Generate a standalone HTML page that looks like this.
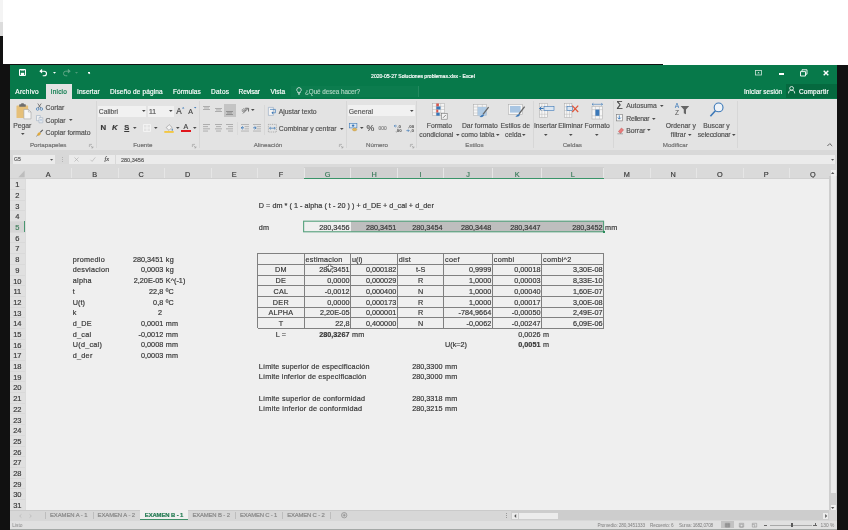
<!DOCTYPE html>
<html lang="es"><head><meta charset="utf-8"><title>Excel</title><style>
html,body{margin:0;padding:0;background:#111;}
body{width:848px;height:530px;overflow:hidden;position:relative;font-family:"Liberation Sans",sans-serif;}
#s{position:absolute;left:0;top:0;width:848px;height:530px;overflow:hidden;filter:blur(.5px);}
#s div,#s span,#s svg,#s i{position:absolute;display:block;}
#s span{line-height:12px;white-space:nowrap;-webkit-text-stroke:.18px;}
#s span.fit{text-align:justify;text-align-last:justify;white-space:nowrap;}
#s i.ar{width:0;height:0;border-left:1.5px solid transparent;border-right:1.5px solid transparent;border-left-style:solid;border-right-style:solid;border-left-color:transparent;border-right-color:transparent;}
#s svg{overflow:visible;}
#s span.c{transform:scaleY(1.08);transform-origin:50% 62%;}
</style></head><body><div id="s">
<div style="left:0px;top:0px;width:848px;height:530px;background:#fff;"></div>
<div style="left:0px;top:0px;width:3px;height:22px;background:#f4f4f4;"></div>
<div style="left:0px;top:21.8px;width:3px;height:14.6px;background:#dcdcdc;"></div>
<div style="left:0px;top:36.3px;width:3px;height:30px;background:#111;"></div>
<div style="left:0px;top:63.7px;width:848px;height:470px;background:#111;"></div>
<div style="left:561.5px;top:63.2px;width:102px;height:0.7px;background:#fff;"></div>
<div style="left:663px;top:63px;width:190px;height:2.4px;background:#fff;"></div>
<div style="left:10px;top:65.3px;width:827px;height:464.7px;background:#e3e3e3;"></div>
<div style="left:10px;top:65.3px;width:827px;height:33.3px;background:#07794a;"></div>
<div style="left:561.5px;top:64.9px;width:101.5px;height:1px;background:#07794a;"></div>
<svg style="left:19px;top:68.9px" width="7.6" height="7.2" viewBox="0 0 7.6 7.2"><path d="M0.5 0.5h6v6h-6z" fill="none" stroke="#fff" stroke-width="1"/><rect x="1.8" y="3.8" width="3.4" height="2.7" fill="#fff"/><rect x="1.5" y="0.5" width="4" height="1.6" fill="#fff" opacity=".6"/></svg>
<svg style="left:39.2px;top:68.2px" width="9" height="9" viewBox="0 0 9 9"><path d="M1 3.2h4.2a2.3 2.3 0 0 1 0 4.6h-1.5" fill="none" stroke="#fff" stroke-width="1.1"/><path d="M0.3 3.2l2.8-2.4v4.8z" fill="#fff"/></svg>
<svg style="left:52.70px;top:71.75px" width="3" height="1.7" viewBox="0 0 3 1.7"><path d="M0 0h3l-1.5 1.7z" fill="#fff"/></svg>
<svg style="left:61.6px;top:68.2px" width="9" height="9" viewBox="0 0 9 9"><path d="M8 3.2h-4.2a2.3 2.3 0 0 0 0 4.6h1.5" fill="none" stroke="#5fa585" stroke-width="1"/><path d="M8.7 3.2l-2.8-2.4v4.8z" fill="#5fa585"/></svg>
<svg style="left:74.80px;top:71.75px" width="3" height="1.7" viewBox="0 0 3 1.7"><path d="M0 0h3l-1.5 1.7z" fill="#4c9a77"/></svg>
<div style="left:88.3px;top:71.6px;width:2.2px;height:0.7px;background:#fff;"></div>
<svg style="left:88.20px;top:72.95px" width="2.4" height="1.3" viewBox="0 0 2.4 1.3"><path d="M0 0h2.4l-1.2 1.3z" fill="#fff"/></svg>
<span style="top:69.60px;font-size:5.1px;color:#fff;letter-spacing:-0.025px;left:371.1px;">2020-05-27 Soluciones problemas.xlsx - Excel</span>
<svg style="left:755px;top:69.8px" width="7" height="5.4" viewBox="0 0 7 5.4"><rect x="0.4" y="0.4" width="6.2" height="4.6" fill="none" stroke="#cfe5da" stroke-width=".8"/><path d="M2.3 3.3l1.2-1.4 1.2 1.4z" fill="#fff"/></svg>
<div style="left:778.6px;top:73.4px;width:5.2px;height:1.3px;background:#fff;"></div>
<svg style="left:799.8px;top:68.5px" width="8" height="8" viewBox="0 0 8 8"><path d="M0.5 2.6h5v4.4h-5z M2 2.4v-1.6h5v4.4h-1.4" fill="none" stroke="#fff" stroke-width=".9"/></svg>
<svg style="left:823.4px;top:69.9px" width="6" height="6" viewBox="0 0 6 6"><path d="M0.7 0.7l4.6 4.6M5.3 0.7l-4.6 4.6" stroke="#fff" stroke-width="1.4"/></svg>
<div style="left:46.2px;top:84px;width:26px;height:15px;background:#e3e3e3;"></div>
<span style="top:86.20px;font-size:6.5px;color:#fff;letter-spacing:0.271px;left:15.3px;">Archivo</span>
<span style="top:86.20px;font-size:6.5px;color:#07794a;letter-spacing:0.165px;left:50.8px;">Inicio</span>
<span style="top:86.20px;font-size:6.5px;color:#fff;letter-spacing:0.080px;left:77px;">Insertar</span>
<span style="top:86.20px;font-size:6.5px;color:#fff;letter-spacing:0.134px;left:110px;">Diseño de página</span>
<span style="top:86.20px;font-size:6.5px;color:#fff;letter-spacing:0.101px;left:173px;">Fórmulas</span>
<span style="top:86.20px;font-size:6.5px;color:#fff;letter-spacing:0.255px;left:211px;">Datos</span>
<span style="top:86.20px;font-size:6.5px;color:#fff;letter-spacing:-0.106px;left:238.6px;">Revisar</span>
<span style="top:86.20px;font-size:6.5px;color:#fff;letter-spacing:0.017px;left:270.6px;">Vista</span>
<svg style="left:295.6px;top:87.2px" width="6" height="8" viewBox="0 0 6 8"><path d="M3 0.6a2.2 2.2 0 0 1 1.3 4v1h-2.6v-1a2.2 2.2 0 0 1 1.3-4z" fill="none" stroke="#fff" stroke-width=".7"/><path d="M2 6.6h2M2.3 7.5h1.4" stroke="#fff" stroke-width=".6"/></svg>
<div style="left:291px;top:85.8px;width:127px;height:11.4px;background:rgba(255,255,255,.025);border-right:.5px solid rgba(255,255,255,.1)"></div>
<span style="top:86.20px;font-size:6.3px;color:#a9d3bf;letter-spacing:-0.043px;left:305px;">¿Qué desea hacer?</span>
<span style="top:86.20px;font-size:6.3px;color:#fff;letter-spacing:0.095px;left:744px;">Iniciar sesión</span>
<div style="left:785.8px;top:84.2px;width:51.2px;height:13.9px;background:#05693f;"></div>
<svg style="left:788.3px;top:86.4px" width="8" height="8" viewBox="0 0 8 8"><circle cx="3.6" cy="2.4" r="1.9" fill="none" stroke="#fff" stroke-width=".8"/><path d="M0.5 7.4c0-2.6 1.6-3.2 3.1-3.2s3.1.6 3.1 3.2" fill="none" stroke="#fff" stroke-width=".8"/></svg>
<span style="top:86.20px;font-size:6.5px;color:#fff;letter-spacing:0.133px;left:799px;">Compartir</span>
<svg style="left:16px;top:102.5px" width="16" height="17" viewBox="0 0 16 17"><rect x="0.5" y="2.5" width="11.6" height="12.6" rx=".6" fill="#e6c079"/><rect x="3.2" y="1.2" width="6.6" height="2.6" rx=".6" fill="#6e6e6e"/><rect x="5" y="0.2" width="3" height="2" rx=".8" fill="#6e6e6e"/><path d="M7.9 6.4h4.5l2.6 2.6v6.9h-7.1z" fill="#f6f6f6" stroke="#a2a2a2" stroke-width=".6"/><path d="M12.4 6.4v2.6h2.6" fill="none" stroke="#a2a2a2" stroke-width=".5"/></svg>
<span style="top:119.80px;font-size:6.8px;color:#525252;left:-77.7px;width:200px;text-align:center;">Pegar</span>
<svg style="left:20.50px;top:132.90px" width="3.6" height="2.0" viewBox="0 0 3.6 2.0"><path d="M0 0h3.6l-1.8 2.0z" fill="#4a4a4a"/></svg>
<svg style="left:35.8px;top:103.2px" width="7" height="8" viewBox="0 0 7 8"><path d="M1.8 0.5l3 4.6M5.2 0.5l-3 4.6" stroke="#555" stroke-width=".7"/><circle cx="1.6" cy="6" r="1.3" fill="none" stroke="#3b78b8" stroke-width=".7"/><circle cx="5.4" cy="6" r="1.3" fill="none" stroke="#3b78b8" stroke-width=".7"/></svg>
<span style="top:101.50px;font-size:6.8px;color:#525252;left:45.5px;">Cortar</span>
<svg style="left:36px;top:115.2px" width="7.4" height="8.4" viewBox="0 0 7.4 8.4"><path d="M0.5 0.5h3.8v5.2h-3.8z" fill="#f1f1f1" stroke="#9fb0c4" stroke-width=".6"/><path d="M3 2.6h3.8v5.2h-3.8z" fill="#f1f1f1" stroke="#9fb0c4" stroke-width=".6"/><path d="M3.8 4.4h2.2M3.8 5.8h2.2" stroke="#7fa3cc" stroke-width=".5"/></svg>
<span style="top:114.50px;font-size:6.8px;color:#525252;left:45.5px;">Copiar</span>
<svg style="left:68.50px;top:119.30px" width="3.6" height="2.0" viewBox="0 0 3.6 2.0"><path d="M0 0h3.6l-1.8 2.0z" fill="#4a4a4a"/></svg>
<svg style="left:35.8px;top:129.2px" width="8" height="8" viewBox="0 0 8 8"><path d="M4.2 3.4l2.6-2.6" stroke="#555" stroke-width="1.1"/><path d="M1 5.2l2.3-2.3 1.8 1.8-2.3 2.3z" fill="#e0a93c"/><path d="M0.5 7.5l1.2-1.6" stroke="#555" stroke-width=".6"/></svg>
<span style="top:127.30px;font-size:6.8px;color:#525252;left:45.5px;">Copiar formato</span>
<span style="top:139.00px;font-size:6.2px;color:#707070;left:-51.8px;width:200px;text-align:center;">Portapapeles</span>
<svg style="left:88.5px;top:144px" width="4.5" height="4.5" viewBox="0 0 4.5 4.5"><path d="M0.4 3V0.4H3" fill="none" stroke="#999" stroke-width=".6"/><path d="M1.6 1.6l2.2 2.2M3.9 2.3v1.6h-1.6" fill="none" stroke="#999" stroke-width=".6"/></svg>
<div style="left:95.5px;top:100.5px;width:0.7px;height:47.5px;background:#d7d7d7;"></div>
<div style="left:97.5px;top:105.8px;width:48.6px;height:10.8px;background:#f1f1f1;"></div>
<div style="left:147.6px;top:105.8px;width:26px;height:10.8px;background:#f1f1f1;"></div>
<span style="top:106.20px;font-size:6.8px;color:#5a5a5a;left:98.8px;">Calibri</span>
<svg style="left:141.60px;top:110.20px" width="3.6" height="2.0" viewBox="0 0 3.6 2.0"><path d="M0 0h3.6l-1.8 2.0z" fill="#4a4a4a"/></svg>
<span style="top:106.20px;font-size:6.8px;color:#5a5a5a;left:149px;">11</span>
<svg style="left:168.80px;top:110.20px" width="3.6" height="2.0" viewBox="0 0 3.6 2.0"><path d="M0 0h3.6l-1.8 2.0z" fill="#4a4a4a"/></svg>
<span style="top:105.60px;font-size:8.2px;color:#444;left:176.2px;">A</span>
<svg style="left:182.4px;top:106.6px" width="2.4" height="1.6" viewBox="0 0 2.4 1.6"><path d="M0 1.6l1.2-1.6 1.2 1.6z" fill="#3b78b8"/></svg>
<span style="top:106.00px;font-size:7px;color:#444;left:188.3px;">A</span>
<svg style="left:193.6px;top:106.8px" width="2.4" height="1.6" viewBox="0 0 2.4 1.6"><path d="M0 0l1.2 1.6 1.2-1.6z" fill="#3b78b8"/></svg>
<span style="top:122.20px;font-size:7.8px;color:#3a3a3a;font-weight:bold;left:100.4px;">N</span>
<span style="top:122.20px;font-size:7.8px;color:#3a3a3a;font-weight:bold;left:112px;font-style:italic;">K</span>
<span style="top:122.20px;font-size:7.6px;color:#3a3a3a;font-weight:bold;left:124.2px;text-decoration:underline;text-decoration-thickness:.6px;text-underline-offset:.6px;">S</span>
<svg style="left:133.40px;top:126.60px" width="3.6" height="2.0" viewBox="0 0 3.6 2.0"><path d="M0 0h3.6l-1.8 2.0z" fill="#4a4a4a"/></svg>
<svg style="left:143px;top:123.5px" width="8" height="8" viewBox="0 0 8 8"><path d="M0.5 0.5h7v7h-7zM4 0.5v7M0.5 4h7" fill="none" stroke="#f3f3f3" stroke-width="1"/></svg>
<svg style="left:154.40px;top:126.60px" width="3.6" height="2.0" viewBox="0 0 3.6 2.0"><path d="M0 0h3.6l-1.8 2.0z" fill="#4a4a4a"/></svg>
<svg style="left:163.5px;top:122.5px" width="10" height="10" viewBox="0 0 10 10"><path d="M2.2 4.6l3-3 2.8 2.8-3 3z" fill="#f3f3f3" stroke="#8a8a8a" stroke-width=".6"/><path d="M8.3 5.3c.5.8.8 1.2.8 1.6a.8.8 0 0 1-1.6 0c0-.4.3-.8.8-1.6z" fill="#6a8fb5"/><rect x="0.3" y="8" width="9.4" height="1.9" fill="#f2c744"/></svg>
<svg style="left:175.50px;top:126.60px" width="3.6" height="2.0" viewBox="0 0 3.6 2.0"><path d="M0 0h3.6l-1.8 2.0z" fill="#4a4a4a"/></svg>
<span style="top:120.60px;font-size:7px;color:#444;left:183.6px;">A</span>
<div style="left:181.2px;top:129.6px;width:9.6px;height:2.9px;background:#e0161c;"></div>
<svg style="left:192.80px;top:126.60px" width="3.6" height="2.0" viewBox="0 0 3.6 2.0"><path d="M0 0h3.6l-1.8 2.0z" fill="#4a4a4a"/></svg>
<span style="top:139.00px;font-size:6.2px;color:#707070;left:42.80000000000001px;width:200px;text-align:center;">Fuente</span>
<svg style="left:192.2px;top:144px" width="4.5" height="4.5" viewBox="0 0 4.5 4.5"><path d="M0.4 3V0.4H3" fill="none" stroke="#999" stroke-width=".6"/><path d="M1.6 1.6l2.2 2.2M3.9 2.3v1.6h-1.6" fill="none" stroke="#999" stroke-width=".6"/></svg>
<div style="left:198.6px;top:100.5px;width:0.7px;height:47.5px;background:#d7d7d7;"></div>
<svg style="left:202.8px;top:106.2px" width="7" height="5.5" viewBox="0 0 7 5.5"><rect x="0.0" y="0.0" width="7" height="0.9" fill="#a8a8a8"/><rect x="1.0" y="1.5" width="5" height="0.9" fill="#a8a8a8"/><rect x="0.0" y="3.0" width="7" height="0.9" fill="#a8a8a8"/></svg>
<svg style="left:214.7px;top:108.2px" width="7" height="5.5" viewBox="0 0 7 5.5"><rect x="0.0" y="0.0" width="7" height="0.9" fill="#a8a8a8"/><rect x="1.0" y="1.5" width="5" height="0.9" fill="#a8a8a8"/><rect x="0.0" y="3.0" width="7" height="0.9" fill="#a8a8a8"/></svg>
<div style="left:224.1px;top:104.4px;width:11.7px;height:12.2px;background:#c4c4c4;"></div>
<svg style="left:226.4px;top:110.6px" width="7" height="5.5" viewBox="0 0 7 5.5"><rect x="0.0" y="0.0" width="7" height="0.9" fill="#8c8c8c"/><rect x="1.0" y="1.5" width="5" height="0.9" fill="#8c8c8c"/><rect x="0.0" y="3.0" width="7" height="0.9" fill="#8c8c8c"/></svg>
<svg style="left:241.8px;top:107px" width="8" height="8" viewBox="0 0 8 8"><path d="M1 6.4l4.6-4.6" stroke="#5c5c5c" stroke-width=".9"/><path d="M3.4 1.2l3.2 0.1-0.1 3.2" fill="none" stroke="#5c5c5c" stroke-width=".9"/><text x="-.4" y="4.4" font-size="4.4" fill="#5c5c5c" font-family="Liberation Sans, sans-serif" transform="rotate(-20 2 4)">ab</text></svg>
<svg style="left:251.40px;top:109.40px" width="3.6" height="2.0" viewBox="0 0 3.6 2.0"><path d="M0 0h3.6l-1.8 2.0z" fill="#4a4a4a"/></svg>
<div style="left:264.3px;top:105px;width:0.6px;height:30px;background:#d8d8d8;"></div>
<svg style="left:268px;top:106.8px" width="9" height="9" viewBox="0 0 9 9"><path d="M0.4 0.4h5v8h-5z" fill="#f4f4f4" stroke="#8fa5bd" stroke-width=".6"/><path d="M2 2.4h5.4v3.4h-3" fill="none" stroke="#3b78b8" stroke-width=".7"/><path d="M5 4.4l-1.6 1.4 1.6 1.4z" fill="#3b78b8"/></svg>
<span style="top:106.40px;font-size:6.8px;color:#525252;left:278.8px;">Ajustar texto</span>
<svg style="left:203px;top:123.8px" width="7" height="9.8" viewBox="0 0 7 9.8"><rect x="0" y="0.0" width="7" height="0.9" fill="#a8a8a8"/><rect x="0" y="2.2" width="5" height="0.9" fill="#a8a8a8"/><rect x="0" y="4.4" width="7" height="0.9" fill="#a8a8a8"/><rect x="0" y="6.6000000000000005" width="5" height="0.9" fill="#a8a8a8"/></svg>
<svg style="left:214.7px;top:123.8px" width="7" height="9.8" viewBox="0 0 7 9.8"><rect x="0.0" y="0.0" width="7" height="0.9" fill="#a8a8a8"/><rect x="1.0" y="2.2" width="5" height="0.9" fill="#a8a8a8"/><rect x="0.0" y="4.4" width="7" height="0.9" fill="#a8a8a8"/><rect x="1.0" y="6.6000000000000005" width="5" height="0.9" fill="#a8a8a8"/></svg>
<svg style="left:226.4px;top:123.8px" width="7" height="9.8" viewBox="0 0 7 9.8"><rect x="0" y="0.0" width="7" height="0.9" fill="#a8a8a8"/><rect x="2" y="2.2" width="5" height="0.9" fill="#a8a8a8"/><rect x="0" y="4.4" width="7" height="0.9" fill="#a8a8a8"/><rect x="2" y="6.6000000000000005" width="5" height="0.9" fill="#a8a8a8"/></svg>
<div style="left:237.4px;top:121.5px;width:0.6px;height:13px;background:#dadada;"></div>
<svg style="left:241.2px;top:123.8px" width="8.4" height="8.6" viewBox="0 0 8.4 8.6"><rect x="0" y="0" width="8" height=".9" fill="#b0b0b0"/><rect x="3.6" y="2.2" width="4.4" height=".9" fill="#b0b0b0"/><rect x="3.6" y="4.4" width="4.4" height=".9" fill="#b0b0b0"/><rect x="0" y="6.6" width="8" height=".9" fill="#b0b0b0"/><path d="M3 3.8h-2.6M1.8 2.4l-1.6 1.4 1.6 1.4" fill="none" stroke="#3b78b8" stroke-width=".9"/></svg>
<svg style="left:252.8px;top:123.8px" width="8.4" height="8.6" viewBox="0 0 8.4 8.6"><rect x="0" y="0" width="8" height=".9" fill="#b0b0b0"/><rect x="3.6" y="2.2" width="4.4" height=".9" fill="#b0b0b0"/><rect x="3.6" y="4.4" width="4.4" height=".9" fill="#b0b0b0"/><rect x="0" y="6.6" width="8" height=".9" fill="#b0b0b0"/><path d="M.2 3.8h2.6M1.6 2.4l1.6 1.4-1.6 1.4" fill="none" stroke="#3b78b8" stroke-width=".9"/></svg>
<svg style="left:268px;top:124px" width="9" height="9" viewBox="0 0 9 9"><rect x="0.4" y="0.4" width="8" height="7.6" fill="none" stroke="#8a8a8a" stroke-width=".6" stroke-dasharray="1 .8"/><path d="M1.6 4.2h5.6M2.8 3l-1.3 1.2 1.3 1.2M6 3l1.3 1.2-1.3 1.2" fill="none" stroke="#3b78b8" stroke-width=".7"/></svg>
<span style="top:123.30px;font-size:6.8px;color:#525252;left:278.8px;">Combinar y centrar</span>
<svg style="left:339.50px;top:127.80px" width="3.6" height="2.0" viewBox="0 0 3.6 2.0"><path d="M0 0h3.6l-1.8 2.0z" fill="#4a4a4a"/></svg>
<span style="top:139.00px;font-size:6.2px;color:#707070;left:168px;width:200px;text-align:center;">Alineación</span>
<svg style="left:339.3px;top:144px" width="4.5" height="4.5" viewBox="0 0 4.5 4.5"><path d="M0.4 3V0.4H3" fill="none" stroke="#999" stroke-width=".6"/><path d="M1.6 1.6l2.2 2.2M3.9 2.3v1.6h-1.6" fill="none" stroke="#999" stroke-width=".6"/></svg>
<div style="left:345.6px;top:100.5px;width:0.7px;height:47.5px;background:#d7d7d7;"></div>
<div style="left:347.6px;top:105.2px;width:67.6px;height:10.8px;background:#f1f1f1;"></div>
<span style="top:106.20px;font-size:6.8px;color:#5a5a5a;left:348.8px;">General</span>
<svg style="left:410.40px;top:110.20px" width="3.6" height="2.0" viewBox="0 0 3.6 2.0"><path d="M0 0h3.6l-1.8 2.0z" fill="#4a4a4a"/></svg>
<svg style="left:348.8px;top:123.4px" width="9" height="9" viewBox="0 0 9 9"><rect x="0.3" y="0.3" width="7.6" height="4.6" fill="#dbe6f1" stroke="#3b78b8" stroke-width=".6"/><circle cx="4.1" cy="2.6" r="1.2" fill="#3b78b8"/><ellipse cx="5.6" cy="6.6" rx="2.2" ry="1.3" fill="#e3b75c" stroke="#b98d2f" stroke-width=".4"/></svg>
<svg style="left:360.00px;top:127.20px" width="3.6" height="2.0" viewBox="0 0 3.6 2.0"><path d="M0 0h3.6l-1.8 2.0z" fill="#4a4a4a"/></svg>
<span style="top:121.80px;font-size:8.8px;color:#505050;left:366.4px;">%</span>
<span style="top:122.60px;font-size:4.8px;color:#808080;left:378.6px;">000</span>
<svg style="left:393.6px;top:123.8px" width="9" height="9" viewBox="0 0 9 9"><text x="3.2" y="3.6" font-size="4.4" fill="#4a4a4a" font-weight="bold" font-family="Liberation Sans, sans-serif">,0</text><text x="1.6" y="8.2" font-size="4.4" fill="#4a4a4a" font-weight="bold" font-family="Liberation Sans, sans-serif">,00</text><path d="M2.8 2h-2.4M1.4 .8l-1.2 1.2 1.2 1.2" fill="none" stroke="#3b78b8" stroke-width=".7"/></svg>
<svg style="left:406.4px;top:123.8px" width="9" height="9" viewBox="0 0 9 9"><text x="2" y="3.6" font-size="4.4" fill="#4a4a4a" font-weight="bold" font-family="Liberation Sans, sans-serif">,00</text><text x="4.2" y="8.2" font-size="4.4" fill="#4a4a4a" font-weight="bold" font-family="Liberation Sans, sans-serif">,0</text><path d="M0.4 6.6h2.6M2 5.4l1.2 1.2-1.2 1.2" fill="none" stroke="#3b78b8" stroke-width=".7"/></svg>
<span style="top:139.00px;font-size:6.2px;color:#707070;left:277px;width:200px;text-align:center;">Número</span>
<svg style="left:410.2px;top:144px" width="4.5" height="4.5" viewBox="0 0 4.5 4.5"><path d="M0.4 3V0.4H3" fill="none" stroke="#999" stroke-width=".6"/><path d="M1.6 1.6l2.2 2.2M3.9 2.3v1.6h-1.6" fill="none" stroke="#999" stroke-width=".6"/></svg>
<div style="left:416.3px;top:100.5px;width:0.7px;height:47.5px;background:#d7d7d7;"></div>
<svg style="left:432px;top:102.5px" width="16" height="17" viewBox="0 0 16 17"><rect x=".3" y=".3" width="12.4" height="12.4" fill="#f6f6f6" stroke="#a5a5a5" stroke-width=".5"/><path d="M.3 3.25H12.7" stroke="#b9b9b9" stroke-width=".5"/><path d="M.3 6.50H12.7" stroke="#b9b9b9" stroke-width=".5"/><path d="M.3 9.75H12.7" stroke="#b9b9b9" stroke-width=".5"/><path d="M4.33 .3V12.7" stroke="#b9b9b9" stroke-width=".5"/><path d="M8.67 .3V12.7" stroke="#b9b9b9" stroke-width=".5"/><rect x="4.3" y=".5" width="2.6" height="3" fill="#d9534a"/><rect x="4.3" y="3.5" width="4.2" height="3" fill="#3b78b8"/><rect x="4.3" y="6.6" width="2" height="3" fill="#d9534a"/><rect x="4.3" y="9.7" width="3.4" height="3" fill="#3b78b8"/><rect x="9.6" y="10.6" width="5.6" height="5.6" fill="#f4f4f4" stroke="#777" stroke-width=".6"/><path d="M11 14.8l2.8-2.8" stroke="#555" stroke-width=".7"/></svg>
<span style="top:120.30px;font-size:6.8px;color:#525252;left:339.4px;width:200px;text-align:center;">Formato</span>
<span style="top:129.00px;font-size:6.8px;color:#525252;left:419.3px;">condicional</span>
<svg style="left:455.80px;top:134.00px" width="3.6" height="2.0" viewBox="0 0 3.6 2.0"><path d="M0 0h3.6l-1.8 2.0z" fill="#4a4a4a"/></svg>
<svg style="left:473px;top:103.5px" width="17" height="16" viewBox="0 0 17 16"><rect x=".3" y=".3" width="13.4" height="11.4" fill="#f6f6f6" stroke="#a5a5a5" stroke-width=".5"/><path d="M.3 3.00H13.7" stroke="#b9b9b9" stroke-width=".5"/><path d="M.3 6.00H13.7" stroke="#b9b9b9" stroke-width=".5"/><path d="M.3 9.00H13.7" stroke="#b9b9b9" stroke-width=".5"/><path d="M4.67 .3V11.7" stroke="#b9b9b9" stroke-width=".5"/><path d="M9.33 .3V11.7" stroke="#b9b9b9" stroke-width=".5"/><rect x="4.6" y="3" width="9" height="8.6" fill="#a9c6e3" opacity=".9"/><path d="M15.6 3.2l-5.6 7.2" stroke="#666" stroke-width="1.3"/><path d="M10 10.4c-1.6.4-2.2 1.8-3.6 2.4 1.8.8 4 .2 4.6-1.6z" fill="#3b78b8"/></svg>
<span style="top:120.30px;font-size:6.8px;color:#525252;left:379.9px;width:200px;text-align:center;">Dar formato</span>
<span style="top:129.00px;font-size:6.8px;color:#525252;left:461.2px;">como tabla</span>
<svg style="left:496.40px;top:134.00px" width="3.6" height="2.0" viewBox="0 0 3.6 2.0"><path d="M0 0h3.6l-1.8 2.0z" fill="#4a4a4a"/></svg>
<svg style="left:508px;top:103.5px" width="18" height="16" viewBox="0 0 18 16"><rect x=".3" y=".3" width="14" height="10" fill="#f6f6f6" stroke="#a5a5a5" stroke-width=".5"/><rect x="2" y="2" width="10.6" height="6.6" fill="#a9c6e3"/><path d="M16.6 2.6l-5.6 7.4" stroke="#666" stroke-width="1.3"/><path d="M11 10c-1.6.4-2.2 1.8-3.6 2.4 1.8.8 4 .2 4.6-1.6z" fill="#3b78b8"/></svg>
<span style="top:120.30px;font-size:6.8px;color:#525252;left:415.29999999999995px;width:200px;text-align:center;">Estilos de</span>
<span style="top:129.00px;font-size:6.8px;color:#525252;left:505px;">celda</span>
<svg style="left:522.40px;top:134.00px" width="3.6" height="2.0" viewBox="0 0 3.6 2.0"><path d="M0 0h3.6l-1.8 2.0z" fill="#4a4a4a"/></svg>
<span style="top:139.00px;font-size:6.2px;color:#707070;left:374.4px;width:200px;text-align:center;">Estilos</span>
<div style="left:532.6px;top:100.5px;width:0.7px;height:47.5px;background:#d7d7d7;"></div>
<svg style="left:538px;top:103px" width="17" height="16" viewBox="-1 0 17 16"><rect x=".3" y=".3" width="8.0" height="14.4" fill="#f6f6f6" stroke="#a5a5a5" stroke-width=".5"/><path d="M.3 3.75H8.299999999999999" stroke="#b9b9b9" stroke-width=".5"/><path d="M.3 7.50H8.299999999999999" stroke="#b9b9b9" stroke-width=".5"/><path d="M.3 11.25H8.299999999999999" stroke="#b9b9b9" stroke-width=".5"/><path d="M2.87 .3V14.7" stroke="#b9b9b9" stroke-width=".5"/><path d="M5.73 .3V14.7" stroke="#b9b9b9" stroke-width=".5"/><rect x="5" y="3.6" width="10" height="3.8" fill="#dbe6f1" stroke="#3b78b8" stroke-width=".6"/><path d="M4.6 5.5h-4M2.4 3.7l-1.9 1.8 1.9 1.8" fill="none" stroke="#3b78b8" stroke-width="1"/></svg>
<span style="top:120.30px;font-size:6.8px;color:#525252;left:445.5px;width:200px;text-align:center;">Insertar</span>
<svg style="left:544.00px;top:133.60px" width="3.6" height="2.0" viewBox="0 0 3.6 2.0"><path d="M0 0h3.6l-1.8 2.0z" fill="#4a4a4a"/></svg>
<svg style="left:564px;top:103px" width="17" height="16" viewBox="0 0 17 16"><rect x=".3" y=".3" width="7.6" height="14.4" fill="#f6f6f6" stroke="#a5a5a5" stroke-width=".5"/><path d="M.3 3.75H7.8999999999999995" stroke="#b9b9b9" stroke-width=".5"/><path d="M.3 7.50H7.8999999999999995" stroke="#b9b9b9" stroke-width=".5"/><path d="M.3 11.25H7.8999999999999995" stroke="#b9b9b9" stroke-width=".5"/><path d="M2.73 .3V14.7" stroke="#b9b9b9" stroke-width=".5"/><path d="M5.47 .3V14.7" stroke="#b9b9b9" stroke-width=".5"/><rect x="3" y="3.6" width="5.6" height="3.8" fill="#dbe6f1" stroke="#3b78b8" stroke-width=".6"/><path d="M8.2 2.6l6 6.4M14.2 2.6l-6 6.4" stroke="#e0563a" stroke-width="1.2"/></svg>
<span style="top:120.30px;font-size:6.8px;color:#525252;left:470.6px;width:200px;text-align:center;">Eliminar</span>
<svg style="left:569.00px;top:133.60px" width="3.6" height="2.0" viewBox="0 0 3.6 2.0"><path d="M0 0h3.6l-1.8 2.0z" fill="#4a4a4a"/></svg>
<svg style="left:590.5px;top:102.5px" width="13" height="17" viewBox="0 0 13 17"><rect x="1" y="3.4" width="10.6" height="12.6" fill="#f6f6f6" stroke="#a5a5a5" stroke-width=".5"/><path d="M1 6.6h10.6M1 12.8h10.6M4.4 3.4v12.6M8.4 3.4v12.6" stroke="#b9b9b9" stroke-width=".5"/><rect x="4.4" y="6.6" width="4" height="6.2" fill="#3b78b8"/><path d="M1 1.3h10.6M2.4 .2l-1.4 1.1 1.4 1.1M10.2 .2l1.4 1.1-1.4 1.1" fill="none" stroke="#3b78b8" stroke-width=".6"/></svg>
<span style="top:120.30px;font-size:6.8px;color:#525252;left:497.20000000000005px;width:200px;text-align:center;">Formato</span>
<svg style="left:595.20px;top:133.60px" width="3.6" height="2.0" viewBox="0 0 3.6 2.0"><path d="M0 0h3.6l-1.8 2.0z" fill="#4a4a4a"/></svg>
<span style="top:139.00px;font-size:6.2px;color:#707070;left:472.29999999999995px;width:200px;text-align:center;">Celdas</span>
<div style="left:613.2px;top:100.5px;width:0.7px;height:47.5px;background:#d7d7d7;"></div>
<span style="top:100.20px;font-size:10px;color:#444;left:616.6px;">Σ</span>
<span style="top:100.30px;font-size:6.8px;color:#525252;letter-spacing:-0.017px;left:626.3px;">Autosuma</span>
<svg style="left:660.00px;top:105.20px" width="3.6" height="2.0" viewBox="0 0 3.6 2.0"><path d="M0 0h3.6l-1.8 2.0z" fill="#4a4a4a"/></svg>
<svg style="left:616.3px;top:113.6px" width="7" height="8.2" viewBox="0 0 7 8.2"><rect x=".3" y=".3" width="6" height="6.6" fill="#f6f6f6" stroke="#777" stroke-width=".6"/><path d="M3.3 1.4v3.6M1.8 3.6l1.5 1.6 1.5-1.6" fill="none" stroke="#3b78b8" stroke-width=".9"/></svg>
<span style="top:112.80px;font-size:6.8px;color:#525252;letter-spacing:-0.304px;left:626.3px;">Rellenar</span>
<svg style="left:651.80px;top:117.70px" width="3.6" height="2.0" viewBox="0 0 3.6 2.0"><path d="M0 0h3.6l-1.8 2.0z" fill="#4a4a4a"/></svg>
<svg style="left:616.6px;top:126.8px" width="8" height="8" viewBox="0 0 8 8"><path d="M1.4 4.6l3-3.6 2.2 1.8-3 3.6z" fill="#e87c7c" stroke="#c04545" stroke-width=".4"/><path d="M.4 6.8h5.6" stroke="#777" stroke-width=".6"/></svg>
<span style="top:124.50px;font-size:6.8px;color:#525252;left:626.3px;">Borrar</span>
<svg style="left:646.80px;top:129.40px" width="3.6" height="2.0" viewBox="0 0 3.6 2.0"><path d="M0 0h3.6l-1.8 2.0z" fill="#4a4a4a"/></svg>
<svg style="left:673.5px;top:102.3px" width="16" height="15" viewBox="0 0 16 15"><text x="0.8" y="6" font-size="6.6" fill="#3b78b8" font-family="Liberation Sans, sans-serif">A</text><text x="1" y="13.4" font-size="6.6" fill="#555" font-family="Liberation Sans, sans-serif">Z</text><path d="M6.6 4h8.6l-3.2 3.6v4.6l-2.2-1v-3.6z" fill="#666"/></svg>
<span style="top:120.30px;font-size:6.8px;color:#525252;left:580.8px;width:200px;text-align:center;">Ordenar y</span>
<span style="top:129.00px;font-size:6.8px;color:#525252;left:670.8px;">filtrar</span>
<svg style="left:688.40px;top:134.00px" width="3.6" height="2.0" viewBox="0 0 3.6 2.0"><path d="M0 0h3.6l-1.8 2.0z" fill="#4a4a4a"/></svg>
<svg style="left:709px;top:102.3px" width="16" height="16" viewBox="0 0 16 16"><circle cx="9.6" cy="5.4" r="4.4" fill="#eef3f8" stroke="#3b78b8" stroke-width="1.1"/><path d="M6.4 8.8l-5 5.4" stroke="#3b78b8" stroke-width="1.6"/></svg>
<span style="top:120.30px;font-size:6.8px;color:#525252;left:616.5px;width:200px;text-align:center;">Buscar y</span>
<span style="top:129.00px;font-size:6.8px;color:#525252;letter-spacing:-0.160px;left:697.8px;">seleccionar</span>
<svg style="left:731.80px;top:134.00px" width="3.6" height="2.0" viewBox="0 0 3.6 2.0"><path d="M0 0h3.6l-1.8 2.0z" fill="#4a4a4a"/></svg>
<span style="top:139.00px;font-size:6.2px;color:#707070;left:575.3px;width:200px;text-align:center;">Modificar</span>
<div style="left:737.3px;top:100.5px;width:0.7px;height:47.5px;background:#d7d7d7;"></div>
<svg style="left:827.2px;top:142.6px" width="5.6" height="3.6" viewBox="0 0 5.6 3.6"><path d="M.4 3l2.4-2.4 2.4 2.4" fill="none" stroke="#555" stroke-width=".9"/></svg>
<div style="left:10px;top:149.6px;width:827px;height:18.2px;background:#d8d8d8;"></div>
<div style="left:12.5px;top:154.8px;width:42.2px;height:8.9px;background:#ebebeb;"></div>
<span style="top:153.40px;font-size:5px;color:#555;left:14px;">G5</span>
<svg style="left:49.60px;top:158.50px" width="3.2" height="1.8" viewBox="0 0 3.2 1.8"><path d="M0 0h3.2l-1.6 1.8z" fill="#555"/></svg>
<div style="left:61.6px;top:157px;width:0.7px;height:0.8px;background:#b4b4b4;"></div>
<div style="left:61.6px;top:158.8px;width:0.7px;height:0.8px;background:#b4b4b4;"></div>
<div style="left:61.6px;top:160.6px;width:0.7px;height:0.8px;background:#b4b4b4;"></div>
<div style="left:68.8px;top:154.8px;width:46.4px;height:8.9px;background:#ebebeb;"></div>
<svg style="left:74px;top:157px" width="5" height="5" viewBox="0 0 5 5"><path d="M.5 .5l4 4M4.5 .5l-4 4" stroke="#aaa" stroke-width=".6"/></svg>
<svg style="left:89.5px;top:157px" width="6" height="5" viewBox="0 0 6 5"><path d="M.5 2.8l1.6 1.6 3.2-4" fill="none" stroke="#aaa" stroke-width=".6"/></svg>
<span style="top:153.30px;font-size:6.4px;color:#505050;left:104.4px;font-style:italic;font-family:Liberation Serif,serif;">fx</span>
<div style="left:116.3px;top:154.8px;width:718.8px;height:8.9px;background:#ebebeb;"></div>
<span style="top:153.50px;font-size:5.5px;color:#5a5a5a;left:121px;">280,3456</span>
<svg style="left:830.60px;top:158.50px" width="3.2" height="1.8" viewBox="0 0 3.2 1.8"><path d="M0 0h3.2l-1.6 1.8z" fill="#555"/></svg>
<div style="left:10px;top:164.2px;width:818.6px;height:14px;background:#dadada;"></div>
<div style="left:10px;top:178.2px;width:15px;height:332px;background:#e0e0e0;"></div>
<div style="left:25px;top:178.2px;width:803.6px;height:332px;background:#efefef;"></div>
<div style="left:304.25px;top:167.4px;width:299.5px;height:10.6px;background:#d0d0d0;"></div>
<div style="left:10px;top:221.35999999999999px;width:15px;height:10.69px;background:#d5d5d5;"></div>
<svg style="left:17.5px;top:170px" width="7" height="7.6" viewBox="0 0 7 7.6"><path d="M6.6 .6v6.6h-6.2z" fill="#bdbdbd"/></svg>
<span style="top:169.00px;font-size:7.3px;color:#3a3a3a;left:-51.75px;width:200px;text-align:center;">A</span>
<div style="left:71.2px;top:167.6px;width:0.7px;height:10.4px;background:#e6e6e6;"></div>
<span style="top:169.00px;font-size:7.3px;color:#3a3a3a;left:-5.25px;width:200px;text-align:center;">B</span>
<div style="left:117.7px;top:167.6px;width:0.7px;height:10.4px;background:#e6e6e6;"></div>
<span style="top:169.00px;font-size:7.3px;color:#3a3a3a;left:41.25px;width:200px;text-align:center;">C</span>
<div style="left:164.2px;top:167.6px;width:0.7px;height:10.4px;background:#e6e6e6;"></div>
<span style="top:169.00px;font-size:7.3px;color:#3a3a3a;left:87.75px;width:200px;text-align:center;">D</span>
<div style="left:210.7px;top:167.6px;width:0.7px;height:10.4px;background:#e6e6e6;"></div>
<span style="top:169.00px;font-size:7.3px;color:#3a3a3a;left:134.25px;width:200px;text-align:center;">E</span>
<div style="left:257.2px;top:167.6px;width:0.7px;height:10.4px;background:#e6e6e6;"></div>
<span style="top:169.00px;font-size:7.3px;color:#3a3a3a;left:180.875px;width:200px;text-align:center;">F</span>
<div style="left:303.95px;top:167.6px;width:0.7px;height:10.4px;background:#e6e6e6;"></div>
<span style="top:169.00px;font-size:7.3px;color:#3a7a5a;left:227.5px;width:200px;text-align:center;">G</span>
<div style="left:350.45px;top:167.6px;width:0.7px;height:10.4px;background:#e6e6e6;"></div>
<span style="top:169.00px;font-size:7.3px;color:#3a7a5a;left:274.125px;width:200px;text-align:center;">H</span>
<div style="left:397.2px;top:167.6px;width:0.7px;height:10.4px;background:#e6e6e6;"></div>
<span style="top:169.00px;font-size:7.3px;color:#3a7a5a;left:320.625px;width:200px;text-align:center;">I</span>
<div style="left:443.45px;top:167.6px;width:0.7px;height:10.4px;background:#e6e6e6;"></div>
<span style="top:169.00px;font-size:7.3px;color:#3a7a5a;left:368.125px;width:200px;text-align:center;">J</span>
<div style="left:492.2px;top:167.6px;width:0.7px;height:10.4px;background:#e6e6e6;"></div>
<span style="top:169.00px;font-size:7.3px;color:#3a7a5a;left:417.125px;width:200px;text-align:center;">K</span>
<div style="left:541.45px;top:167.6px;width:0.7px;height:10.4px;background:#e6e6e6;"></div>
<span style="top:169.00px;font-size:7.3px;color:#3a7a5a;left:472.75px;width:200px;text-align:center;">L</span>
<div style="left:603.45px;top:167.6px;width:0.7px;height:10.4px;background:#e6e6e6;"></div>
<span style="top:169.00px;font-size:7.3px;color:#3a3a3a;left:526.875px;width:200px;text-align:center;">M</span>
<div style="left:649.7px;top:167.6px;width:0.7px;height:10.4px;background:#e6e6e6;"></div>
<span style="top:169.00px;font-size:7.3px;color:#3a3a3a;left:573.25px;width:200px;text-align:center;">N</span>
<div style="left:696.2px;top:167.6px;width:0.7px;height:10.4px;background:#e6e6e6;"></div>
<span style="top:169.00px;font-size:7.3px;color:#3a3a3a;left:619.75px;width:200px;text-align:center;">O</span>
<div style="left:742.7px;top:167.6px;width:0.7px;height:10.4px;background:#e6e6e6;"></div>
<span style="top:169.00px;font-size:7.3px;color:#3a3a3a;left:666.25px;width:200px;text-align:center;">P</span>
<div style="left:789.2px;top:167.6px;width:0.7px;height:10.4px;background:#e6e6e6;"></div>
<span style="top:169.00px;font-size:7.3px;color:#3a3a3a;left:712.75px;width:200px;text-align:center;">Q</span>
<div style="left:835.7px;top:167.6px;width:0.7px;height:10.4px;background:#e6e6e6;"></div>
<span style="top:179.34px;font-size:7.5px;color:#3a3a3a;left:-82.7px;width:200px;text-align:center;">1</span>
<div style="left:10px;top:188.98999999999998px;width:15px;height:0.6px;background:#d9d9d9;"></div>
<span style="top:190.03px;font-size:7.5px;color:#3a3a3a;left:-82.7px;width:200px;text-align:center;">2</span>
<div style="left:10px;top:199.67999999999998px;width:15px;height:0.6px;background:#d9d9d9;"></div>
<span style="top:200.72px;font-size:7.5px;color:#3a3a3a;left:-82.7px;width:200px;text-align:center;">3</span>
<div style="left:10px;top:210.36999999999998px;width:15px;height:0.6px;background:#d9d9d9;"></div>
<span style="top:211.41px;font-size:7.5px;color:#3a3a3a;left:-82.7px;width:200px;text-align:center;">4</span>
<div style="left:10px;top:221.05999999999997px;width:15px;height:0.6px;background:#d9d9d9;"></div>
<span style="top:222.10px;font-size:7.5px;color:#43805f;left:-82.7px;width:200px;text-align:center;">5</span>
<div style="left:10px;top:231.74999999999997px;width:15px;height:0.6px;background:#d9d9d9;"></div>
<span style="top:232.79px;font-size:7.5px;color:#3a3a3a;left:-82.7px;width:200px;text-align:center;">6</span>
<div style="left:10px;top:242.43999999999997px;width:15px;height:0.6px;background:#d9d9d9;"></div>
<span style="top:243.49px;font-size:7.5px;color:#3a3a3a;left:-82.7px;width:200px;text-align:center;">7</span>
<div style="left:10px;top:253.13px;width:15px;height:0.6px;background:#d9d9d9;"></div>
<span style="top:254.18px;font-size:7.5px;color:#3a3a3a;left:-82.7px;width:200px;text-align:center;">8</span>
<div style="left:10px;top:263.82px;width:15px;height:0.6px;background:#d9d9d9;"></div>
<span style="top:264.87px;font-size:7.5px;color:#3a3a3a;left:-82.7px;width:200px;text-align:center;">9</span>
<div style="left:10px;top:274.51px;width:15px;height:0.6px;background:#d9d9d9;"></div>
<span style="top:275.56px;font-size:7.5px;color:#3a3a3a;left:-82.7px;width:200px;text-align:center;">10</span>
<div style="left:10px;top:285.2px;width:15px;height:0.6px;background:#d9d9d9;"></div>
<span style="top:286.25px;font-size:7.5px;color:#3a3a3a;left:-82.7px;width:200px;text-align:center;">11</span>
<div style="left:10px;top:295.89px;width:15px;height:0.6px;background:#d9d9d9;"></div>
<span style="top:296.94px;font-size:7.5px;color:#3a3a3a;left:-82.7px;width:200px;text-align:center;">12</span>
<div style="left:10px;top:306.58px;width:15px;height:0.6px;background:#d9d9d9;"></div>
<span style="top:307.62px;font-size:7.5px;color:#3a3a3a;left:-82.7px;width:200px;text-align:center;">13</span>
<div style="left:10px;top:317.27px;width:15px;height:0.6px;background:#d9d9d9;"></div>
<span style="top:318.31px;font-size:7.5px;color:#3a3a3a;left:-82.7px;width:200px;text-align:center;">14</span>
<div style="left:10px;top:327.96px;width:15px;height:0.6px;background:#d9d9d9;"></div>
<span style="top:329.00px;font-size:7.5px;color:#3a3a3a;left:-82.7px;width:200px;text-align:center;">15</span>
<div style="left:10px;top:338.65px;width:15px;height:0.6px;background:#d9d9d9;"></div>
<span style="top:339.69px;font-size:7.5px;color:#3a3a3a;left:-82.7px;width:200px;text-align:center;">16</span>
<div style="left:10px;top:349.34px;width:15px;height:0.6px;background:#d9d9d9;"></div>
<span style="top:350.38px;font-size:7.5px;color:#3a3a3a;left:-82.7px;width:200px;text-align:center;">17</span>
<div style="left:10px;top:360.03px;width:15px;height:0.6px;background:#d9d9d9;"></div>
<span style="top:361.07px;font-size:7.5px;color:#3a3a3a;left:-82.7px;width:200px;text-align:center;">18</span>
<div style="left:10px;top:370.71999999999997px;width:15px;height:0.6px;background:#d9d9d9;"></div>
<span style="top:371.76px;font-size:7.5px;color:#3a3a3a;left:-82.7px;width:200px;text-align:center;">19</span>
<div style="left:10px;top:381.40999999999997px;width:15px;height:0.6px;background:#d9d9d9;"></div>
<span style="top:382.45px;font-size:7.5px;color:#3a3a3a;left:-82.7px;width:200px;text-align:center;">20</span>
<div style="left:10px;top:392.09999999999997px;width:15px;height:0.6px;background:#d9d9d9;"></div>
<span style="top:393.14px;font-size:7.5px;color:#3a3a3a;left:-82.7px;width:200px;text-align:center;">21</span>
<div style="left:10px;top:402.78999999999996px;width:15px;height:0.6px;background:#d9d9d9;"></div>
<span style="top:403.83px;font-size:7.5px;color:#3a3a3a;left:-82.7px;width:200px;text-align:center;">22</span>
<div style="left:10px;top:413.47999999999996px;width:15px;height:0.6px;background:#d9d9d9;"></div>
<span style="top:414.52px;font-size:7.5px;color:#3a3a3a;left:-82.7px;width:200px;text-align:center;">23</span>
<div style="left:10px;top:424.16999999999996px;width:15px;height:0.6px;background:#d9d9d9;"></div>
<span style="top:425.21px;font-size:7.5px;color:#3a3a3a;left:-82.7px;width:200px;text-align:center;">24</span>
<div style="left:10px;top:434.85999999999996px;width:15px;height:0.6px;background:#d9d9d9;"></div>
<span style="top:435.90px;font-size:7.5px;color:#3a3a3a;left:-82.7px;width:200px;text-align:center;">25</span>
<div style="left:10px;top:445.54999999999995px;width:15px;height:0.6px;background:#d9d9d9;"></div>
<span style="top:446.60px;font-size:7.5px;color:#3a3a3a;left:-82.7px;width:200px;text-align:center;">26</span>
<div style="left:10px;top:456.24px;width:15px;height:0.6px;background:#d9d9d9;"></div>
<span style="top:457.28px;font-size:7.5px;color:#3a3a3a;left:-82.7px;width:200px;text-align:center;">27</span>
<div style="left:10px;top:466.92999999999995px;width:15px;height:0.6px;background:#d9d9d9;"></div>
<span style="top:467.98px;font-size:7.5px;color:#3a3a3a;left:-82.7px;width:200px;text-align:center;">28</span>
<div style="left:10px;top:477.62px;width:15px;height:0.6px;background:#d9d9d9;"></div>
<span style="top:478.66px;font-size:7.5px;color:#3a3a3a;left:-82.7px;width:200px;text-align:center;">29</span>
<div style="left:10px;top:488.30999999999995px;width:15px;height:0.6px;background:#d9d9d9;"></div>
<span style="top:489.36px;font-size:7.5px;color:#3a3a3a;left:-82.7px;width:200px;text-align:center;">30</span>
<div style="left:10px;top:499.0px;width:15px;height:0.6px;background:#d9d9d9;"></div>
<span style="top:500.04px;font-size:7.5px;color:#3a3a3a;left:-82.7px;width:200px;text-align:center;">31</span>
<div style="left:10px;top:509.68999999999994px;width:15px;height:0.6px;background:#d9d9d9;"></div>
<div style="left:24.7px;top:178.2px;width:0.4px;height:332px;background:#dcdcdc;"></div>
<div style="left:10px;top:177.9px;width:818.6px;height:0.5px;background:#d0d0d0;"></div>
<div style="left:304.25px;top:177.6px;width:299.5px;height:1.1px;background:#3a9469;"></div>
<div style="left:24px;top:221.35999999999999px;width:1.1px;height:10.69px;background:#4a9670;"></div>
<span class="c" style="top:253.78px;font-size:7.25px;color:#363636;left:72.8px;letter-spacing:.24px;">promedio</span>
<span class="c" style="top:264.47px;font-size:7.25px;color:#363636;left:72.8px;letter-spacing:.24px;">desviacion</span>
<span class="c" style="top:275.16px;font-size:7.25px;color:#363636;left:72.8px;letter-spacing:.24px;">alpha</span>
<span class="c" style="top:285.85px;font-size:7.25px;color:#363636;left:72.8px;">t</span>
<span class="c" style="top:296.54px;font-size:7.25px;color:#363636;left:72.8px;">U(t)</span>
<span class="c" style="top:307.23px;font-size:7.25px;color:#363636;left:72.8px;">k</span>
<span class="c" style="top:317.92px;font-size:7.25px;color:#363636;left:72.8px;letter-spacing:.24px;">d_DE</span>
<span class="c" style="top:328.61px;font-size:7.25px;color:#363636;left:72.8px;letter-spacing:.24px;">d_cal</span>
<span class="c" style="top:339.30px;font-size:7.25px;color:#363636;left:72.8px;letter-spacing:.24px;">U(d_cal)</span>
<span class="c" style="top:349.99px;font-size:7.25px;color:#363636;left:72.8px;letter-spacing:.24px;">d_der</span>
<span class="c" style="top:253.78px;font-size:7.25px;color:#363636;right:684.80px;">280,3451</span>
<span class="c" style="top:264.47px;font-size:7.25px;color:#363636;right:684.80px;">0,0003</span>
<span class="c" style="top:275.16px;font-size:7.25px;color:#363636;right:684.80px;">2,20E-05</span>
<span class="c" style="top:285.85px;font-size:7.25px;color:#363636;right:684.80px;">22,8</span>
<span class="c" style="top:296.54px;font-size:7.25px;color:#363636;right:684.80px;">0,8</span>
<span class="c" style="top:307.23px;font-size:7.25px;color:#363636;right:685.90px;">2</span>
<span class="c" style="top:317.92px;font-size:7.25px;color:#363636;right:684.80px;">0,0001</span>
<span class="c" style="top:328.61px;font-size:7.25px;color:#363636;right:684.80px;">-0,0012</span>
<span class="c" style="top:339.30px;font-size:7.25px;color:#363636;right:684.80px;">0,0008</span>
<span class="c" style="top:349.99px;font-size:7.25px;color:#363636;right:684.80px;">0,0003</span>
<span class="c" style="top:253.78px;font-size:7.25px;color:#363636;left:165.8px;letter-spacing:.24px;">kg</span>
<span class="c" style="top:264.47px;font-size:7.25px;color:#363636;left:165.8px;letter-spacing:.24px;">kg</span>
<span class="c" style="top:275.16px;font-size:7.25px;color:#363636;left:165.8px;">K^(-1)</span>
<span class="c" style="top:285.85px;font-size:7.25px;color:#363636;left:165.8px;">ºC</span>
<span class="c" style="top:296.54px;font-size:7.25px;color:#363636;left:165.8px;">ºC</span>
<span class="c" style="top:317.92px;font-size:7.25px;color:#363636;left:165.8px;letter-spacing:.24px;">mm</span>
<span class="c" style="top:328.61px;font-size:7.25px;color:#363636;left:165.8px;letter-spacing:.24px;">mm</span>
<span class="c" style="top:339.30px;font-size:7.25px;color:#363636;left:165.8px;letter-spacing:.24px;">mm</span>
<span class="c" style="top:349.99px;font-size:7.25px;color:#363636;left:165.8px;letter-spacing:.24px;">mm</span>
<span style="top:200.32px;font-size:7.25px;color:#363636;letter-spacing:0.024px;left:258.8px;transform:scaleY(1.08);transform-origin:50% 62%;">D = dm * ( 1 - alpha ( t - 20 ) ) + d_DE + d_cal + d_der</span>
<span class="c" style="top:221.70px;font-size:7.25px;color:#363636;left:258.8px;letter-spacing:.24px;">dm</span>
<div style="left:350.75px;top:221.35999999999999px;width:253.0px;height:10.69px;background:#bebebe;"></div>
<span class="c" style="top:221.70px;font-size:7.25px;color:#363636;right:498.55px;">280,3456</span>
<span class="c" style="top:221.70px;font-size:7.25px;color:#363636;right:451.80px;">280,3451</span>
<span class="c" style="top:221.70px;font-size:7.25px;color:#363636;right:405.55px;">280,3454</span>
<span class="c" style="top:221.70px;font-size:7.25px;color:#363636;right:356.80px;">280,3448</span>
<span class="c" style="top:221.70px;font-size:7.25px;color:#363636;right:307.55px;">280,3447</span>
<span class="c" style="top:221.70px;font-size:7.25px;color:#363636;right:245.55px;">280,3452</span>
<span class="c" style="top:221.70px;font-size:7.25px;color:#363636;left:605.05px;letter-spacing:.24px;">mm</span>
<svg style="left:303.25px;top:220.35999999999999px" width="301.5" height="12.69" viewBox="0 0 301.5 12.69"><rect x=".6" y="1.2" width="300.0" height="10.59" fill="none" stroke="#55a07c" stroke-width="1.1"/></svg>
<div style="left:602.65px;top:231.14999999999998px;width:1.9px;height:1.9px;background:#2a8a5a;"></div>
<div style="left:257.5px;top:253.13px;width:346.25px;height:0.62px;background:#808080;"></div>
<div style="left:257.5px;top:263.82px;width:346.25px;height:0.62px;background:#808080;"></div>
<div style="left:257.5px;top:274.51px;width:346.25px;height:0.62px;background:#808080;"></div>
<div style="left:257.5px;top:285.2px;width:346.25px;height:0.62px;background:#808080;"></div>
<div style="left:257.5px;top:295.89px;width:346.25px;height:0.62px;background:#808080;"></div>
<div style="left:257.5px;top:306.58px;width:346.25px;height:0.62px;background:#808080;"></div>
<div style="left:257.5px;top:317.27px;width:346.25px;height:0.62px;background:#808080;"></div>
<div style="left:257.5px;top:327.96px;width:346.25px;height:0.62px;background:#808080;"></div>
<div style="left:257.2px;top:253.43px;width:0.62px;height:74.83px;background:#808080;"></div>
<div style="left:303.95px;top:253.43px;width:0.62px;height:74.83px;background:#808080;"></div>
<div style="left:350.45px;top:253.43px;width:0.62px;height:74.83px;background:#808080;"></div>
<div style="left:397.2px;top:253.43px;width:0.62px;height:74.83px;background:#808080;"></div>
<div style="left:443.45px;top:253.43px;width:0.62px;height:74.83px;background:#808080;"></div>
<div style="left:492.2px;top:253.43px;width:0.62px;height:74.83px;background:#808080;"></div>
<div style="left:541.45px;top:253.43px;width:0.62px;height:74.83px;background:#808080;"></div>
<div style="left:603.45px;top:253.43px;width:0.62px;height:74.83px;background:#808080;"></div>
<span class="c" style="top:253.78px;font-size:7.25px;color:#363636;left:305.55px;letter-spacing:.24px;">estimacion</span>
<span class="c" style="top:253.78px;font-size:7.25px;color:#363636;left:352.05px;">u(i)</span>
<span class="c" style="top:253.78px;font-size:7.25px;color:#363636;left:398.8px;letter-spacing:.24px;">dist</span>
<span class="c" style="top:253.78px;font-size:7.25px;color:#363636;left:445.05px;letter-spacing:.24px;">coef</span>
<span class="c" style="top:253.78px;font-size:7.25px;color:#363636;left:493.8px;letter-spacing:.24px;">combi</span>
<span class="c" style="top:253.78px;font-size:7.25px;color:#363636;left:543.05px;letter-spacing:.24px;">combi^2</span>
<span class="c" style="top:264.47px;font-size:7.25px;color:#363636;left:180.875px;width:200px;text-align:center;letter-spacing:.24px;">DM</span>
<span class="c" style="top:264.47px;font-size:7.25px;color:#363636;right:498.55px;">280,3451</span>
<span class="c" style="top:264.47px;font-size:7.25px;color:#363636;right:451.80px;">0,000182</span>
<span class="c" style="top:264.47px;font-size:7.25px;color:#363636;left:320.625px;width:200px;text-align:center;">t-S</span>
<span class="c" style="top:264.47px;font-size:7.25px;color:#363636;right:356.80px;">0,9999</span>
<span class="c" style="top:264.47px;font-size:7.25px;color:#363636;right:307.55px;">0,00018</span>
<span class="c" style="top:264.47px;font-size:7.25px;color:#363636;right:245.55px;">3,30E-08</span>
<span class="c" style="top:275.16px;font-size:7.25px;color:#363636;left:180.875px;width:200px;text-align:center;letter-spacing:.24px;">DE</span>
<span class="c" style="top:275.16px;font-size:7.25px;color:#363636;right:498.55px;">0,0000</span>
<span class="c" style="top:275.16px;font-size:7.25px;color:#363636;right:451.80px;">0,000029</span>
<span class="c" style="top:275.16px;font-size:7.25px;color:#363636;left:320.625px;width:200px;text-align:center;">R</span>
<span class="c" style="top:275.16px;font-size:7.25px;color:#363636;right:356.80px;">1,0000</span>
<span class="c" style="top:275.16px;font-size:7.25px;color:#363636;right:307.55px;">0,00003</span>
<span class="c" style="top:275.16px;font-size:7.25px;color:#363636;right:245.55px;">8,33E-10</span>
<span class="c" style="top:285.85px;font-size:7.25px;color:#363636;left:180.875px;width:200px;text-align:center;letter-spacing:.24px;">CAL</span>
<span class="c" style="top:285.85px;font-size:7.25px;color:#363636;right:498.55px;">-0,0012</span>
<span class="c" style="top:285.85px;font-size:7.25px;color:#363636;right:451.80px;">0,000400</span>
<span class="c" style="top:285.85px;font-size:7.25px;color:#363636;left:320.625px;width:200px;text-align:center;">N</span>
<span class="c" style="top:285.85px;font-size:7.25px;color:#363636;right:356.80px;">1,0000</span>
<span class="c" style="top:285.85px;font-size:7.25px;color:#363636;right:307.55px;">0,00040</span>
<span class="c" style="top:285.85px;font-size:7.25px;color:#363636;right:245.55px;">1,60E-07</span>
<span class="c" style="top:296.54px;font-size:7.25px;color:#363636;left:180.875px;width:200px;text-align:center;letter-spacing:.24px;">DER</span>
<span class="c" style="top:296.54px;font-size:7.25px;color:#363636;right:498.55px;">0,0000</span>
<span class="c" style="top:296.54px;font-size:7.25px;color:#363636;right:451.80px;">0,000173</span>
<span class="c" style="top:296.54px;font-size:7.25px;color:#363636;left:320.625px;width:200px;text-align:center;">R</span>
<span class="c" style="top:296.54px;font-size:7.25px;color:#363636;right:356.80px;">1,0000</span>
<span class="c" style="top:296.54px;font-size:7.25px;color:#363636;right:307.55px;">0,00017</span>
<span class="c" style="top:296.54px;font-size:7.25px;color:#363636;right:245.55px;">3,00E-08</span>
<span class="c" style="top:307.23px;font-size:7.25px;color:#363636;left:180.875px;width:200px;text-align:center;letter-spacing:.24px;">ALPHA</span>
<span class="c" style="top:307.23px;font-size:7.25px;color:#363636;right:498.55px;">2,20E-05</span>
<span class="c" style="top:307.23px;font-size:7.25px;color:#363636;right:451.80px;">0,000001</span>
<span class="c" style="top:307.23px;font-size:7.25px;color:#363636;left:320.625px;width:200px;text-align:center;">R</span>
<span class="c" style="top:307.23px;font-size:7.25px;color:#363636;right:356.80px;">-784,9664</span>
<span class="c" style="top:307.23px;font-size:7.25px;color:#363636;right:307.55px;">-0,00050</span>
<span class="c" style="top:307.23px;font-size:7.25px;color:#363636;right:245.55px;">2,49E-07</span>
<span class="c" style="top:317.92px;font-size:7.25px;color:#363636;left:180.875px;width:200px;text-align:center;">T</span>
<span class="c" style="top:317.92px;font-size:7.25px;color:#363636;right:498.55px;">22,8</span>
<span class="c" style="top:317.92px;font-size:7.25px;color:#363636;right:451.80px;">0,400000</span>
<span class="c" style="top:317.92px;font-size:7.25px;color:#363636;left:320.625px;width:200px;text-align:center;">N</span>
<span class="c" style="top:317.92px;font-size:7.25px;color:#363636;right:356.80px;">-0,0062</span>
<span class="c" style="top:317.92px;font-size:7.25px;color:#363636;right:307.55px;">-0,00247</span>
<span class="c" style="top:317.92px;font-size:7.25px;color:#363636;right:245.55px;">6,09E-06</span>
<span class="c" style="top:328.61px;font-size:7.25px;color:#363636;left:180.875px;width:200px;text-align:center;">L =</span>
<span class="c" style="top:328.61px;font-size:7.25px;color:#363636;font-weight:bold;right:498.55px;">280,3267</span>
<span class="c" style="top:328.61px;font-size:7.25px;color:#363636;left:352.05px;letter-spacing:.24px;">mm</span>
<span class="c" style="top:328.61px;font-size:7.25px;color:#363636;right:307.55px;">0,0026</span>
<span class="c" style="top:328.61px;font-size:7.25px;color:#363636;left:543.05px;">m</span>
<span class="c" style="top:339.30px;font-size:7.25px;color:#363636;left:445.05px;">U(k=2)</span>
<span class="c" style="top:339.30px;font-size:7.25px;color:#363636;font-weight:bold;right:307.55px;">0,0051</span>
<span class="c" style="top:339.30px;font-size:7.25px;color:#363636;left:543.05px;">m</span>
<span style="top:360.68px;font-size:7.25px;color:#363636;letter-spacing:0.161px;left:258.8px;transform:scaleY(1.08);transform-origin:50% 62%;">Límite superior de especificación</span>
<span class="c" style="top:360.68px;font-size:7.25px;color:#363636;right:405.55px;">280,3300</span>
<span class="c" style="top:360.68px;font-size:7.25px;color:#363636;left:445.05px;letter-spacing:.24px;">mm</span>
<span style="top:371.37px;font-size:7.25px;color:#363636;letter-spacing:0.186px;left:258.8px;transform:scaleY(1.08);transform-origin:50% 62%;">Límite inferior de especificación</span>
<span class="c" style="top:371.37px;font-size:7.25px;color:#363636;right:405.55px;">280,3000</span>
<span class="c" style="top:371.37px;font-size:7.25px;color:#363636;left:445.05px;letter-spacing:.24px;">mm</span>
<span style="top:392.75px;font-size:7.25px;color:#363636;letter-spacing:0.218px;left:258.8px;transform:scaleY(1.08);transform-origin:50% 62%;">Límite superior de conformidad</span>
<span class="c" style="top:392.75px;font-size:7.25px;color:#363636;right:405.55px;">280,3318</span>
<span class="c" style="top:392.75px;font-size:7.25px;color:#363636;left:445.05px;letter-spacing:.24px;">mm</span>
<span style="top:403.44px;font-size:7.25px;color:#363636;letter-spacing:0.253px;left:258.8px;transform:scaleY(1.08);transform-origin:50% 62%;">Límite inferior de conformidad</span>
<span class="c" style="top:403.44px;font-size:7.25px;color:#363636;right:405.55px;">280,3215</span>
<span class="c" style="top:403.44px;font-size:7.25px;color:#363636;left:445.05px;letter-spacing:.24px;">mm</span>
<svg style="left:326.4px;top:264.3px" width="7.4" height="7.4" viewBox="0 0 7.4 7.4"><path d="M2.6 .4h2.2v2.2h2.2v2.2h-2.2v2.2h-2.2v-2.2h-2.2v-2.2h2.2z" fill="#fff" stroke="#3a3a3a" stroke-width=".7"/></svg>
<div style="left:828.6px;top:164.2px;width:8.399999999999977px;height:346px;background:#dadada;"></div>
<div style="left:829.0px;top:176px;width:7.999999999999977px;height:334.2px;background:#cecece;"></div>
<div style="left:830.5px;top:176.3px;width:5.9px;height:317px;background:#ebebeb;"></div>
<div style="left:830.5px;top:169.8px;width:5.9px;height:6px;background:#f0f0f0;"></div>
<svg style="left:831.4px;top:171.9px" width="3.4" height="2" viewBox="0 0 3.4 2"><path d="M0 2l1.7-2 1.7 2z" fill="#555"/></svg>
<div style="left:830.5px;top:505px;width:5.9px;height:5.2px;background:#f0f0f0;"></div>
<svg style="left:831.4px;top:506.8px" width="3.4" height="2" viewBox="0 0 3.4 2"><path d="M0 0l1.7 2 1.7-2z" fill="#555"/></svg>
<div style="left:10px;top:509.8px;width:827px;height:11.4px;background:#d7d7d7;"></div>
<div style="left:10px;top:509.7px;width:818.6px;height:0.6px;background:#cacaca;"></div>
<svg style="left:18.8px;top:513.6px" width="3" height="4" viewBox="0 0 3 4"><path d="M2.4 .4l-1.8 1.6 1.8 1.6" fill="none" stroke="#b5b5b5" stroke-width=".7"/></svg>
<svg style="left:28.8px;top:513.6px" width="3" height="4" viewBox="0 0 3 4"><path d="M.6 .4l1.8 1.6-1.8 1.6" fill="none" stroke="#b5b5b5" stroke-width=".7"/></svg>
<div style="left:140.4px;top:510px;width:47.8px;height:9.2px;background:#f0f0f0;"></div>
<div style="left:140.4px;top:518.6px;width:47.8px;height:0.9px;background:#3f9068;"></div>
<span style="top:509.40px;font-size:5.9px;color:#878787;letter-spacing:-0.070px;left:50px;">EXAMEN A - 1</span>
<span style="top:509.40px;font-size:5.9px;color:#878787;letter-spacing:-0.070px;left:97.6px;">EXAMEN A - 2</span>
<span style="top:509.40px;font-size:5.9px;color:#217a51;font-weight:bold;letter-spacing:-0.097px;left:144.8px;">EXAMEN B - 1</span>
<span style="top:509.40px;font-size:5.9px;color:#878787;letter-spacing:-0.129px;left:192.4px;">EXAMEN B - 2</span>
<span style="top:509.40px;font-size:5.9px;color:#878787;letter-spacing:-0.177px;left:240px;">EXAMEN C - 1</span>
<span style="top:509.40px;font-size:5.9px;color:#878787;letter-spacing:-0.158px;left:287.2px;">EXAMEN C - 2</span>
<div style="left:45.4px;top:511.6px;width:0.6px;height:7.6px;background:#bdbdbd;"></div>
<div style="left:92.6px;top:511.6px;width:0.6px;height:7.6px;background:#bdbdbd;"></div>
<div style="left:235px;top:511.6px;width:0.6px;height:7.6px;background:#bdbdbd;"></div>
<div style="left:282.2px;top:511.6px;width:0.6px;height:7.6px;background:#bdbdbd;"></div>
<div style="left:329.6px;top:511.6px;width:0.6px;height:7.6px;background:#bdbdbd;"></div>
<svg style="left:340.6px;top:512.2px" width="6.4" height="6.4" viewBox="0 0 6.4 6.4"><circle cx="3.2" cy="3.2" r="2.7" fill="none" stroke="#7a7a7a" stroke-width=".6"/><path d="M3.2 1.6v3.2M1.6 3.2h3.2" stroke="#7a7a7a" stroke-width=".6"/></svg>
<div style="left:506px;top:513px;width:0.7px;height:0.9px;background:#999;"></div>
<div style="left:506px;top:514.8px;width:0.7px;height:0.9px;background:#999;"></div>
<div style="left:506px;top:516.6px;width:0.7px;height:0.9px;background:#999;"></div>
<div style="left:510.5px;top:510.4px;width:318px;height:10px;background:#cdcdcd;"></div>
<div style="left:512px;top:512.6px;width:5.8px;height:6.2px;background:#ececec;"></div>
<svg style="left:513.8px;top:513.8px" width="2.4" height="4" viewBox="0 0 2.4 4"><path d="M2.2 0l-2 2 2 2z" fill="#555"/></svg>
<div style="left:518.8px;top:512.6px;width:39.4px;height:6.2px;background:#ececec;"></div>
<div style="left:822.6px;top:512.6px;width:5.8px;height:6.2px;background:#ececec;"></div>
<svg style="left:824.6px;top:513.8px" width="2.4" height="4" viewBox="0 0 2.4 4"><path d="M.2 0l2 2-2 2z" fill="#555"/></svg>
<div style="left:10px;top:520.6px;width:827px;height:0.8px;background:#cfcfcf;"></div>
<div style="left:10px;top:521.3px;width:827px;height:7.6px;background:#e0e0e0;"></div>
<div style="left:10px;top:528.9px;width:827px;height:1.2px;background:#a4a8a6;"></div>
<span style="top:519.70px;font-size:4.9px;color:#8a8a8a;left:12.2px;-webkit-text-stroke:0;">Listo</span>
<span style="top:519.70px;font-size:4.7px;color:#808080;left:597.4px;-webkit-text-stroke:0;letter-spacing:-.12px;">Promedio: 280,3451333</span>
<span style="top:519.70px;font-size:4.7px;color:#808080;left:650px;-webkit-text-stroke:0;letter-spacing:-.165px;">Recuento: 6</span>
<span style="top:519.70px;font-size:4.7px;color:#808080;left:679px;-webkit-text-stroke:0;letter-spacing:-.2px;">Suma: 1682,0708</span>
<div style="left:721.4px;top:521px;width:12.2px;height:7.4px;background:#c2c2c2;"></div>
<svg style="left:725px;top:522.6px" width="5" height="4.4" viewBox="0 0 5 4.4"><path d="M.3 .3h4.4v3.8h-4.4zM.3 1.6h4.4M.3 2.9h4.4M1.8 .3v3.8M3.3 .3v3.8" fill="none" stroke="#777" stroke-width=".5"/></svg>
<svg style="left:738.6px;top:522.6px" width="5" height="4.4" viewBox="0 0 5 4.4"><path d="M.3 .3h4.4v3.8h-4.4zM1.2 1.3h2.6v2.8h-2.6z" fill="none" stroke="#888" stroke-width=".5"/></svg>
<svg style="left:752.4px;top:522.6px" width="5" height="4.4" viewBox="0 0 5 4.4"><path d="M.3 .3h4.4v3.8h-4.4zM.3 1.6h2.4v2.5" fill="none" stroke="#888" stroke-width=".5"/></svg>
<div style="left:764.4px;top:524.5px;width:3px;height:0.7px;background:#666;"></div>
<div style="left:769.8px;top:524.6px;width:42.6px;height:0.5px;background:#a8a8a8;"></div>
<div style="left:790.8px;top:522.6px;width:1.8px;height:4.4px;background:#5a5a5a;"></div>
<div style="left:813.4px;top:524.5px;width:3.4px;height:0.7px;background:#666;"></div>
<div style="left:814.75px;top:523.1px;width:0.7px;height:3.4px;background:#666;"></div>
<span style="top:519.70px;font-size:4.9px;color:#808080;right:13.60px;-webkit-text-stroke:0;">130 %</span>
</div></body></html>
